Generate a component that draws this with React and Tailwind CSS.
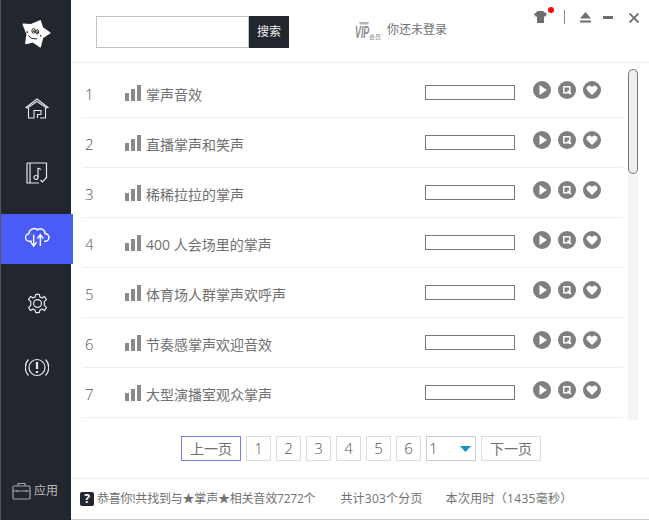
import React from "react";

const songs = [
  "掌声音效",
  "直播掌声和笑声",
  "稀稀拉拉的掌声",
  "400 人会场里的掌声",
  "体育场人群掌声欢呼声",
  "节奏感掌声欢迎音效",
  "大型演播室观众掌声",
];

const fontStack = "font-['Open_Sans','Noto_Sans_CJK_SC',sans-serif]";

const Logo = () => (
  <svg width="33" height="33" viewBox="60 50 100 100">
    <path
      d="M70 72 L92 74 L121 62 L128 83 L150 98 L128 112 L121 140 L100 125 L78 130 L82 102 Z"
      fill="#fff"
      stroke="#fff"
      strokeWidth="5"
      strokeLinejoin="round"
    />
    <ellipse cx="101" cy="92" rx="5" ry="7" fill="none" stroke="#222" strokeWidth="3" />
    <ellipse cx="112" cy="95" rx="4.5" ry="6.5" fill="none" stroke="#222" strokeWidth="3" />
    <circle cx="102" cy="93" r="2.5" fill="#222" />
    <circle cx="112" cy="96" r="2.5" fill="#222" />
    <path d="M86 106 Q92 118 112 116" fill="none" stroke="#222" strokeWidth="3" />
    <circle cx="82" cy="96" r="2.5" fill="#222" />
    <circle cx="123" cy="107" r="2.5" fill="#222" />
  </svg>
);

const HomeIcon = () => (
  <svg className="-mt-[2px]" width="24" height="21" viewBox="0 0 24 21" fill="none" stroke="#e5e7eb" strokeWidth="1.1">
    <path d="M1 9.5 L12 1 L23 9.5 L21.5 10 L12 3.5 L2.5 10 Z" />
    <path d="M3.5 10 V20 H9 V12.5 H16 V16.5 H12.5 V20 M20.5 10 V20 H15" />
  </svg>
);

const MusicCheck = () => (
  <svg className="-mt-[2px]" width="22" height="22" viewBox="0 0 22 22" fill="none" stroke="#e5e7eb" strokeWidth="1.2">
    <path d="M1 1 H20.5 V15 M1 1 V21 H13" />
    <path d="M4 1 V21" />
    <path d="M12 6 V15 M12 6 L15 7.5" />
    <circle cx="10" cy="15.5" r="2" />
    <path d="M14.5 18 L16.5 20 L21 15" />
  </svg>
);

const CloudSync = () => (
  <svg className="-mt-[4px]" width="25" height="21" viewBox="0 0 26 22" fill="none" stroke="#fff" strokeWidth="1.5">
    <path d="M7 15 H5 A4 4 0 0 1 4 7 A5.5 5.5 0 0 1 13 3 A5 5 0 0 1 21 7 A4 4 0 0 1 21 15 H20" />
    <path d="M9 8 V19 M6 16 L9 20 L12 16" />
    <path d="M16 20 V9 M13 12 L16 8 L19 12" />
  </svg>
);

const Gear = () => (
  <svg className="-mt-[2px]" width="21" height="21" viewBox="0 0 24 24" fill="none" stroke="#e5e7eb" strokeWidth="1.4" strokeLinejoin="round">
    <path d="M10 1.5 H14 L14.8 4.6 L17.2 5.6 L20 4 L22.2 7.6 L19.8 9.6 V12 V14.4 L22.2 16.4 L20 20 L17.2 18.4 L14.8 19.4 L14 22.5 H10 L9.2 19.4 L6.8 18.4 L4 20 L1.8 16.4 L4.2 14.4 V9.6 L1.8 7.6 L4 4 L6.8 5.6 L9.2 4.6 Z" />
    <circle cx="12" cy="12" r="4.5" />
  </svg>
);

const Alert = () => (
  <svg className="-mt-[4px]" width="24" height="21" viewBox="0 0 24 21" fill="none" stroke="#e5e7eb" strokeWidth="1.2">
    <circle cx="12" cy="10.5" r="8" />
    <path d="M3.5 2.5 A11.5 11.5 0 0 0 3.5 18.5 M20.5 2.5 A11.5 11.5 0 0 1 20.5 18.5" />
    <path d="M12 5 V12" strokeWidth="2.2" />
    <path d="M12 14 V16" strokeWidth="2.2" />
  </svg>
);

const Briefcase = () => (
  <svg width="19" height="18" viewBox="0 0 19 18" fill="none" stroke="#a3a3a3" strokeWidth="1.2">
    <rect x="1" y="4" width="17" height="13" rx="1" />
    <path d="M6 4 V1.5 H13 V4 M1 9 H18" />
    <path d="M5 8 V10 M14 8 V10" />
  </svg>
);

const VipLogo = () => (
  <svg width="27" height="22" viewBox="0 0 27 22">
    <path d="M5 3 H15 L14 5.5 H6 Z" fill="#b5b5b5" />
    <text transform="translate(1 19) scale(0.52 1)" fontSize="17" fontWeight="700" fontStyle="italic" fontFamily="'Liberation Sans',sans-serif" fill="#8c8c8c">
      VIP
    </text>
    <text x="15" y="20" fontSize="6" fontFamily="'Noto Sans CJK SC',sans-serif" fill="#8c8c8c">
      会员
    </text>
  </svg>
);

const Bars = () => (
  <svg width="16" height="16" viewBox="0 0 16 16" fill="#8a8a8a">
    <rect x="0" y="8" width="4" height="8" />
    <rect x="6" y="4" width="4" height="12" />
    <rect x="12" y="0" width="4" height="16" />
  </svg>
);

const RoundBtn = ({ children }) => (
  <span className="w-[18px] h-[18px] rounded-full bg-[#7f7f7f] flex items-center justify-center">
    <svg width="18" height="18" viewBox="0 0 18 18">{children}</svg>
  </span>
);

const Row = ({ index, title }) => (
  <div className="h-[50px] flex items-center border-b border-[#eeeeee] shrink-0">
    <span className="w-[43px] pl-[3px] pt-[4px] text-[15px] font-light text-[#555]">{index}</span>
    <Bars />
    <span className="ml-[5px] pt-[4px] flex-1 text-[14px] text-[#707070]">{title}</span>
    <span className="w-[90px] h-[15px] border border-[#777]"></span>
    <div className="ml-[18px] mr-[22px] flex gap-[7px] -mt-[6px]">
      <RoundBtn>
        <path d="M6.5 4 L14 9 L6.5 14 Z" fill="#fff" />
      </RoundBtn>
      <RoundBtn>
        <rect x="5.8" y="5.8" width="6" height="6" fill="none" stroke="#fff" strokeWidth="1.5" />
        <path d="M9.5 9.5 L13 13" stroke="#fff" strokeWidth="1.5" />
      </RoundBtn>
      <RoundBtn>
        <path d="M9 14 L4 9 A2.8 2.8 0 0 1 9 6.2 A2.8 2.8 0 0 1 14 9 Z" fill="#fff" />
      </RoundBtn>
    </div>
  </div>
);

const PageBtn = ({ children, wide, active }) => (
  <span
    className={`h-[25px] flex items-center justify-center border ${wide ? "w-[60px] text-[14px] text-[#707070]" : "w-[25px] text-[15px] font-light text-[#555]"} ${active ? "border-[#7080e0]" : "border-[#dddddd]"}`}
  >
    {children}
  </span>
);

const SideIcon = ({ children, active }) => (
  <div className={`h-[50px] w-[72px] flex items-center justify-center ${active ? "bg-[#4a5cf8]" : ""}`}>{children}</div>
);

export default function App() {
  return (
    <div className={`w-[649px] h-[520px] flex bg-white overflow-hidden ${fontStack}`}>
      <aside className="w-[71px] shrink-0 bg-[#22262f] flex flex-col items-start border-l border-[#555]">
        <div className="w-full flex justify-center pt-[17px]">
          <Logo />
        </div>
        <div className="mt-[34px] flex flex-col gap-[15px]">
          <SideIcon>
            <HomeIcon />
          </SideIcon>
          <SideIcon>
            <MusicCheck />
          </SideIcon>
          <SideIcon active>
            <CloudSync />
          </SideIcon>
          <SideIcon>
            <Gear />
          </SideIcon>
          <SideIcon>
            <Alert />
          </SideIcon>
        </div>
        <div className="mt-auto mb-[20px] ml-[11px] flex items-center gap-[3px] text-[12px] text-[#bbb]">
          <Briefcase />
          <span>应用</span>
        </div>
      </aside>
      <main className="flex-1 flex flex-col min-w-0 border-b border-[#cccccc]">
        <header className="h-[63px] shrink-0 border-b border-[#eeeeee] flex items-start relative">
          <div className="ml-[25px] mt-[16px] flex">
            <div className="w-[153px] h-[32px] border border-[#c4c4c4]"></div>
            <button className="w-[40px] h-[32px] bg-[#22262f] text-[#eee] text-[12px]">搜索</button>
          </div>
          <div className="ml-[65px] mt-[19px] flex items-center gap-[6px] text-[12px] text-[#707070]">
            <VipLogo />
            <span>你还未登录</span>
          </div>
          <div className="absolute right-[10px] top-[10px] h-[14px] flex items-center">
            <div className="relative w-[13px] h-[12px]">
              <svg width="13" height="12" viewBox="0 0 13 12" fill="#6f6f6f">
                <path d="M4 0 L0 3 L2 6 L3 5 V12 H10 V5 L11 6 L13 3 L9 0 Z" />
              </svg>
              <span className="absolute -top-[4px] -right-[7px] w-[6px] h-[6px] rounded-full bg-[#ff0000]"></span>
            </div>
            <span className="ml-[17px] w-px h-[14px] bg-[#888]"></span>
            <svg className="ml-[15px]" width="11" height="11" viewBox="0 0 11 11" fill="#6f6f6f">
              <path d="M5.5 0 L11 6.5 H0 Z" />
              <rect x="0" y="8.5" width="11" height="2" />
            </svg>
            <span className="ml-[12px] mt-[1px] w-[10px] h-[3px] bg-[#6f6f6f]"></span>
            <svg className="ml-[16px] mt-[1px]" width="10" height="10" viewBox="0 0 10 10" stroke="#6f6f6f" strokeWidth="1.9">
              <path d="M0.5 0.5 L9.5 9.5 M9.5 0.5 L0.5 9.5" />
            </svg>
          </div>
        </header>
        <div className="flex-1 flex min-h-0">
          <div className="flex-1 min-w-0 ml-[11px] flex flex-col">
            <div className="h-[355px] pt-[5px] flex flex-col">
              {songs.map((title, i) => (
                <Row key={title} index={i + 1} title={title} />
              ))}
            </div>
            <div className="flex-1 flex justify-center pt-[18px] pl-[17px] gap-[5px]">
              <PageBtn wide active>上一页</PageBtn>
              <PageBtn>1</PageBtn>
              <PageBtn>2</PageBtn>
              <PageBtn>3</PageBtn>
              <PageBtn>4</PageBtn>
              <PageBtn>5</PageBtn>
              <PageBtn>6</PageBtn>
              <span className="w-[50px] h-[25px] border border-[#cccccc] flex items-center justify-between pl-[2px] pr-[4px] text-[15px] font-light text-[#555]">
                1
                <svg width="11" height="6" viewBox="0 0 11 6">
                  <path d="M0 0 H11 L5.5 6 Z" fill="#1a8fc4" />
                </svg>
              </span>
              <PageBtn wide>下一页</PageBtn>
            </div>
          </div>
          <div className="w-[10px] ml-[5px] mr-[11px] h-[351px] bg-[#f4f4f4] mt-[6px]">
            <div className="w-[10px] h-[105px] border border-[#777] rounded-[5px] bg-[#eeeeee]"></div>
          </div>
        </div>
        <footer className="h-[41px] shrink-0 border-t border-[#eeeeee] flex items-center pl-[9px] text-[12px] text-[#707070] whitespace-nowrap">
          <span className="w-[14px] h-[14px] rounded-[2px] bg-[#22262f] text-white text-[12px] font-bold flex items-center justify-center mr-[3px]">?</span>
          <span className="tracking-[-0.2px]">恭喜你!共找到与★掌声★相关音效7272个</span>
          <span className="ml-[25px] tracking-[0.2px]">共计303个分页</span>
          <span className="ml-[23px] tracking-[0.3px]">本次用时（1435毫秒）</span>
        </footer>
      </main>
    </div>
  );
}
